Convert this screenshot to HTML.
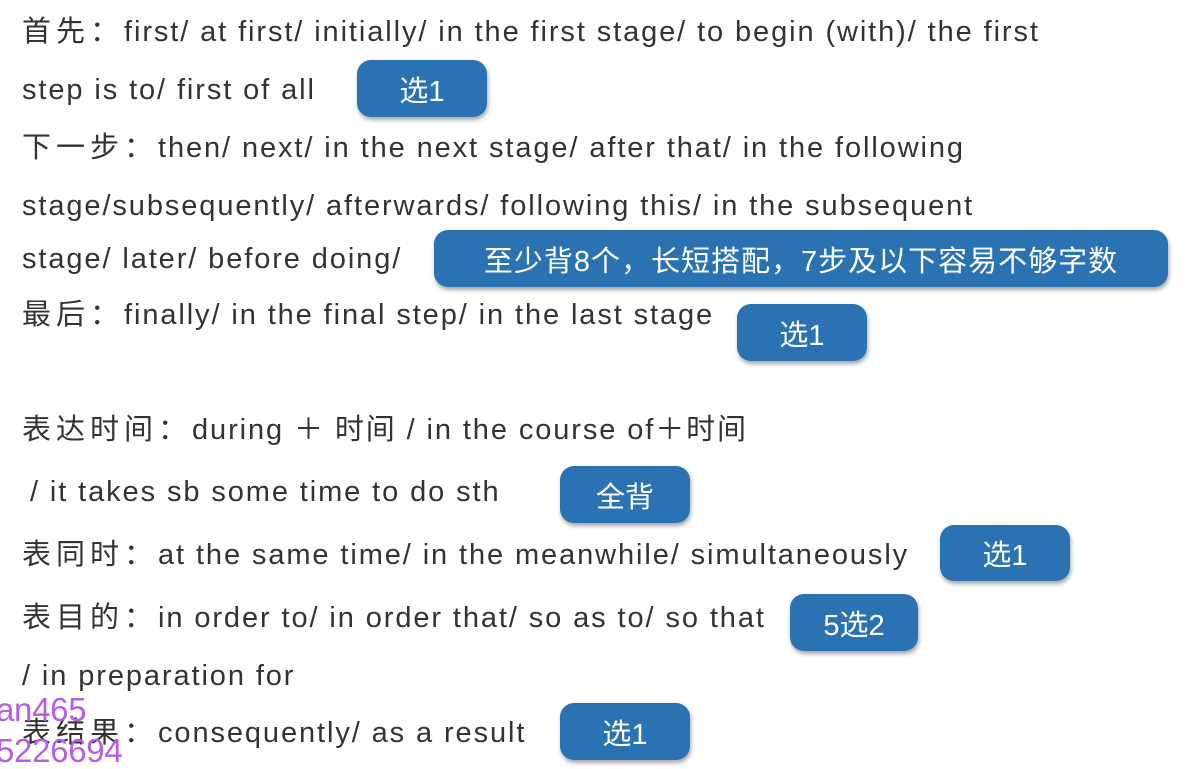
<!DOCTYPE html>
<html><head><meta charset="utf-8"><style>
body{margin:0;width:1191px;height:769px;background:#fff;overflow:hidden;position:relative;font-family:"Liberation Sans","Noto Sans CJK SC",sans-serif;color:#333}
.t{position:absolute;left:22px;font-size:29px;line-height:36px;white-space:nowrap;letter-spacing:1.9px}
.t span{letter-spacing:5px}
.b{position:absolute;background:#2a72b2;color:#fff;border-radius:14px;font-size:29px;display:flex;align-items:center;justify-content:center;box-shadow:1px 3px 4px rgba(0,0,0,.35);font-family:"Liberation Sans","Noto Sans CJK SC",sans-serif}
.w{position:absolute;left:-4px;color:#b55ee6;font-size:33px;font-family:"Liberation Sans",sans-serif;line-height:36px;letter-spacing:-0.3px}
</style></head><body>
<div class="t" style="top:14px"><span>首先：</span>first/ at first/ initially/ in the first stage/ to begin (with)/ the first</div>
<div class="t" style="top:72px">step is to/ first of all</div>
<div class="b" style="left:357px;top:60px;width:130px;height:57px">选1</div>
<div class="t" style="top:130px"><span>下一步：</span>then/ next/ in the next stage/ after that/ in the following</div>
<div class="t" style="top:188px">stage/subsequently/ afterwards/ following this/ in the subsequent</div>
<div class="t" style="top:241px">stage/ later/ before doing/</div>
<div class="b" style="left:434px;top:230px;width:734px;height:57px;letter-spacing:1px">至少背8个，长短搭配，7步及以下容易不够字数</div>
<div class="t" style="top:297px"><span>最后：</span>finally/ in the final step/ in the last stage</div>
<div class="b" style="left:737px;top:304px;width:130px;height:57px">选1</div>
<div class="t" style="top:412px"><span>表达时间：</span>during ＋ 时间 / in the course of＋时间</div>
<div class="t" style="top:474px;left:30px">/ it takes sb some time to do sth</div>
<div class="b" style="left:560px;top:466px;width:130px;height:57px">全背</div>
<div class="t" style="top:537px"><span>表同时：</span>at the same time/ in the meanwhile/ simultaneously</div>
<div class="b" style="left:940px;top:525px;width:130px;height:56px">选1</div>
<div class="t" style="top:600px"><span>表目的：</span>in order to/ in order that/ so as to/ so that</div>
<div class="b" style="left:790px;top:594px;width:128px;height:57px">5选2</div>
<div class="t" style="top:658px">/ in preparation for</div>
<div class="t" style="top:715px"><span>表结果：</span>consequently/ as a result</div>
<div class="b" style="left:560px;top:703px;width:130px;height:57px">选1</div>
<div class="w" style="top:692px">an465</div>
<div class="w" style="top:733px">5226694</div>
</body></html>
